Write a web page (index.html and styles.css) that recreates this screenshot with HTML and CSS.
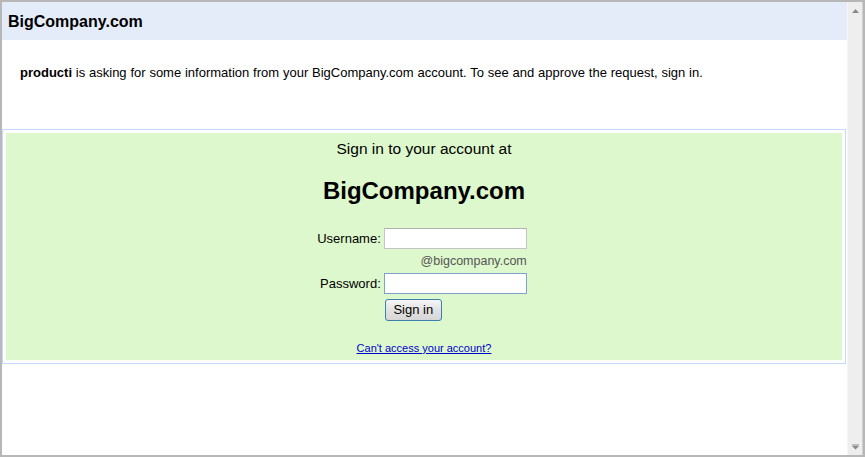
FILE: index.html
```html
<!DOCTYPE html>
<html>
<head>
<meta charset="utf-8">
<title>BigCompany.com</title>
<link rel="stylesheet" href="styles.css">
</head>
<body>
<div class="window">
  <div class="page">
    <div class="header">BigCompany.com</div>
    <p class="intro"><b>producti</b> is asking for some information from your BigCompany.com account. To see and approve the request, sign in.</p>
    <div class="box">
      <div class="signin">
        <div class="title">Sign in to your account at</div>
        <div class="brand">BigCompany.com</div>
        <div class="form">
          <label class="label" for="u">Username:</label>
          <input class="field" id="u" type="text">
          <span></span>
          <span class="domain">@bigcompany.com</span>
          <label class="label" for="p">Password:</label>
          <input class="field field-active" id="p" type="password">
          <span></span>
          <div class="btn-cell"><button class="btn" type="button">Sign in</button></div>
        </div>
        <a class="help" href="#">Can't access your account?</a>
      </div>
    </div>
  </div>
  <div class="scrollbar">
    <svg class="arrow" width="9" height="6" viewBox="0 0 9 6"><path d="M4.5 1 L8 5 L1 5 Z" fill="#8a8a8a"/></svg>
    <svg class="arrow" width="9" height="6" viewBox="0 0 9 6"><path d="M1 0.5 H8 V1.5 H1 Z M1 2 L8 2 L4.5 5.5 Z" fill="#8a8a8a"/></svg>
  </div>
</div>
</body>
</html>
```
FILE: styles.css
```css
html, body {
  margin: 0;
  padding: 0;
  overflow: hidden;
  background: #ffffff;
}

.window {
  width: 865px;
  height: 457px;
  box-sizing: border-box;
  border: 2px solid #b7b7b7;
  display: flex;
  font-family: "Liberation Sans", Arial, sans-serif;
  color: #000;
}

.page {
  flex: 1;
  min-width: 0;
  background: #fff;
}

.header {
  height: 38px;
  background: #e5ecf9;
  font-size: 16px;
  font-weight: bold;
  line-height: 40px;
  padding-left: 6px;
}

.intro {
  margin: 0;
  padding: 25px 18px 0 18px;
  font-size: 13px;
  line-height: 16px;
  height: 16px;
  word-spacing: 0.2px;
}

.box {
  margin: 48px 1px 0 0;
  border: 1px solid #c3d9ff;
  padding: 3px;
}

.signin {
  background: #ddf8cc;
  padding: 6px 0 5px;
  display: flex;
  flex-direction: column;
  align-items: center;
}

.title {
  font-size: 15.5px;
  line-height: 19px;
}

.brand {
  margin-top: 19px;
  font-size: 24px;
  font-weight: bold;
  line-height: 28px;
}

.form {
  margin-top: 23px;
  margin-right: 4px;
  display: grid;
  grid-template-columns: auto 143px;
  column-gap: 3px;
  align-items: center;
}

.label {
  font-size: 13px;
  text-align: right;
  line-height: 16px;
}

.field {
  box-sizing: border-box;
  width: 143px;
  height: 21px;
  margin: 0;
  border: 1px solid #c5c5c5;
  border-top-color: #b0b0b0;
  background: #fff;
  padding: 1px 3px;
  font-size: 13px;
  outline: none;
}

.field-active {
  border-color: #7da2ce;
}

.domain {
  font-size: 12.5px;
  color: #555;
  text-align: right;
  line-height: 24px;
}

.btn-cell {
  padding-top: 5px;
}

.btn {
  box-sizing: border-box;
  width: 57px;
  height: 22px;
  margin: 0 0 0 1px;
  border: 1px solid #3c7fb1;
  border-radius: 3px;
  background: linear-gradient(#f6f6f6, #e2e2e2 50%, #d6d6d6);
  font-family: "Liberation Sans", Arial, sans-serif;
  font-size: 13px;
  color: #000;
  padding: 0;
  line-height: 18px;
}

.help {
  margin-top: 21px;
  font-size: 11px;
  line-height: 13px;
  color: #0000cc;
  text-decoration: underline;
}

.scrollbar {
  width: 16px;
  background: #eeeeee;
  border-left: 1px solid #f6f6f6;
  box-sizing: border-box;
  box-shadow: inset -1px 0 0 #d0d0d0;
  display: flex;
  flex-direction: column;
  justify-content: space-between;
  align-items: center;
  padding: 6px 0 5px;
}

.arrow {
  display: block;
}
```
